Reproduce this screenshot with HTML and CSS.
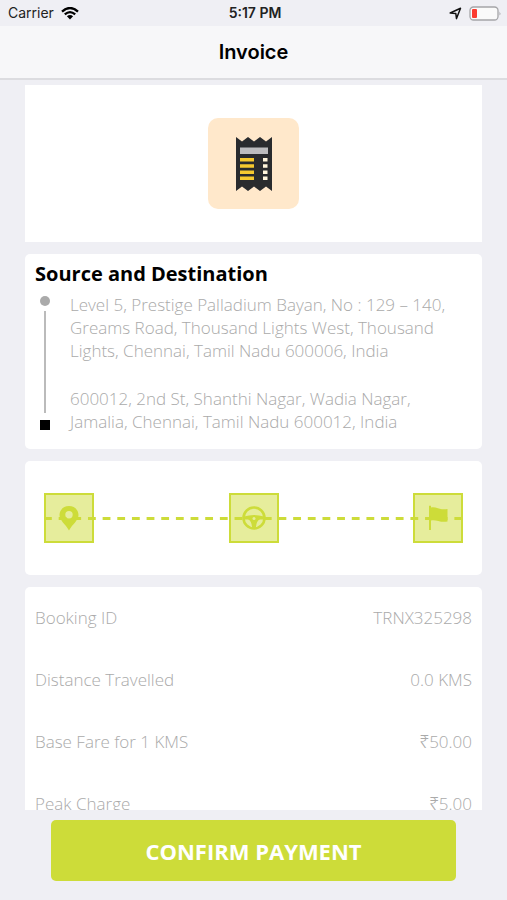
FILE: index.html
```html
<!DOCTYPE html>
<html lang="en">
<head>
<meta charset="utf-8">
<meta name="viewport" content="width=device-width, initial-scale=1">
<title>Invoice</title>
<link rel="stylesheet" href="styles.css">
</head>
<body>
<div class="status">
  <div class="status-left">
    <span>Carrier</span>
    <svg width="18" height="13" viewBox="0 0 18 13" aria-hidden="true">
      <path d="M1 4.6Q9-2.6 17 4.6M3.8 7.4Q9 2.8 14.2 7.4" fill="none" stroke="#000" stroke-width="2.3"/>
      <path d="M5.900 9.300Q9 6.900 12.100 9.300L9 12.600z"/>
    </svg>
  </div>
  <div class="status-time">5:17 PM</div>
  <div class="status-right">
    <svg width="13" height="13" viewBox="0 0 13 13" aria-hidden="true">
      <path d="M1.200 6L11.500 1.300 7.500 11.600 6.800 6.500z" fill="none" stroke="#111" stroke-width="1.500" stroke-linejoin="round"/>
    </svg>
    <svg width="33" height="15" viewBox="0 0 33 15" aria-hidden="true">
      <rect x="1" y="1" width="28" height="13" rx="3.500" fill="#fafafa" stroke="#a5a5a8" stroke-width="1.300"/>
      <rect x="3" y="3" width="5" height="9" rx="1" fill="#fb3b30"/>
      <path d="M30.500 5.500q1.800 2 0 4z" fill="#a5a5a8"/>
    </svg>
  </div>
</div>
<header class="nav"><h1>Invoice</h1></header>

<main class="content">
  <section class="card hero">
    <div class="hero-icon">
      <svg width="38" height="54" viewBox="0 0 38 54" aria-hidden="true">
        <path d="M1 0L7 4.500 13 0 19 4.500 25 0 31 4.500 37 0V54L31 49.500 25 54 19 49.500 13 54 7 49.500 1 54z" fill="#292b2e"/>
        <path d="M5 10.500h28v6.500H5z" fill="#bcbcbe"/>
        <path d="M5 21h14v3.500H5zM5 27.300h14v3.500H5zM5 33.400h14v3.500H5zM5 39.500h14V43H5z" fill="#f5c92f"/>
        <path d="M28 21h4.500v3.500H28zM28 27.300h4.500v3.500H28zM28 33.400h4.500v3.500H28zM28 39.500h4.500V43H28z" fill="#fff6dc"/>
      </svg>
    </div>
  </section>

  <section class="card route">
    <h2>Source and Destination</h2>
    <div class="route-body">
      <div class="route-rail">
        <span class="rail-dot"></span>
        <span class="rail-line"></span>
        <span class="rail-square"></span>
      </div>
      <div class="route-text">
        <p>Level 5, Prestige Palladium Bayan, No : 129 – 140, Greams Road, Thousand Lights West, Thousand Lights, Chennai, Tamil Nadu 600006, India</p>
        <p>600012, 2nd St, Shanthi Nagar, Wadia Nagar, Jamalia, Chennai, Tamil Nadu 600012, India</p>
      </div>
    </div>
  </section>

  <section class="card progress">
    <div class="steps">
      <div class="step">
        <svg width="26" height="30" viewBox="0 0 26 30" aria-hidden="true">
          <path fill-rule="evenodd" d="M13 3C7.500 3 3.500 7 3.500 12c0 5.500 6 9 9.500 15.500C16.500 21 22.500 17.500 22.500 12 22.500 7 18.500 3 13 3zm0 5a3.700 3.700 0 1 1 0 7.400 3.700 3.700 0 0 1 0-7.400z"/>
        </svg>
      </div>
      <div class="step">
        <svg width="26" height="30" viewBox="0 0 26 30" aria-hidden="true">
          <circle cx="13" cy="15" r="10.500" fill="none" stroke="#cddc39" stroke-width="2.600"/>
          <path d="M3 13.500Q13 10.500 23 13.500V16.500H19Q15.500 17 14.800 25H11.200Q10.500 17 7 16.500H3z"/>
          <circle cx="13" cy="15.500" r="1.500" fill="#e6ed9c"/>
        </svg>
      </div>
      <div class="step">
        <svg width="26" height="30" viewBox="0 0 26 30" aria-hidden="true">
          <path d="M4 3q1-1 2 0v1.500C11 3 14 7.500 22.500 6V18.500C15 20 11 16 6 17.500V27H4z"/>
        </svg>
      </div>
    </div>
  </section>

  <section class="card fares">
    <dl>
      <div class="fare"><dt>Booking ID</dt><dd>TRNX325298</dd></div>
      <div class="fare"><dt>Distance Travelled</dt><dd>0.0 KMS</dd></div>
      <div class="fare"><dt>Base Fare for 1 KMS</dt><dd>₹50.00</dd></div>
      <div class="fare"><dt>Peak Charge</dt><dd>₹5.00</dd></div>
    </dl>
  </section>
</main>

<footer class="footer">
  <button type="button" class="confirm">CONFIRM PAYMENT</button>
</footer>
</body>
</html>
```
FILE: styles.css
```css
* {
  box-sizing: border-box;
  margin: 0;
  padding: 0;
}

body {
  display: flex;
  flex-direction: column;
  height: 100vh;
  background: #efeff4;
  color: #000;
  font-family: "Open Sans", "Noto Sans", sans-serif;
}

svg {
  display: block;
}

.status {
  display: grid;
  grid-template-columns: 1fr auto 1fr;
  align-items: center;
  flex: none;
  height: 26px;
  padding: 0 5px 0 8px;
  font: 14px/26px Inter, sans-serif;
  color: #222;
}

.status-left,
.status-right {
  display: flex;
  align-items: center;
  gap: 7px;
}

.status-right {
  justify-content: flex-end;
}

.status-time {
  font-weight: 600;
}

.nav {
  flex: none;
  background: #f7f7f9;
  border-bottom: 2px solid #dcdce0;
  text-align: center;
}

.nav h1 {
  font: 600 20px/52px Inter, sans-serif;
}

.content {
  display: flex;
  flex-direction: column;
  flex: 1;
  gap: 12px;
  min-height: 0;
  overflow-x: hidden;
  overflow-y: auto;
  scrollbar-width: none;
  padding: 5px 25px 0;
}

.card {
  flex: none;
  background: #fff;
  border-radius: 5px;
}

.hero {
  display: flex;
  justify-content: center;
  padding: 33px 0;
  border-radius: 0;
}

.hero-icon {
  display: grid;
  place-items: center;
  width: 91px;
  height: 91px;
  border-radius: 10px;
  background: #ffe8cb;
}

.route {
  padding: 6px 10px 16px;
}

.route h2 {
  font-size: 20px;
  line-height: 28px;
  font-weight: 700;
}

.route-body {
  display: flex;
  gap: 17px;
  padding-top: 5px;
}

.route-rail {
  display: flex;
  flex-direction: column;
  align-items: center;
  width: 16px;
  padding: 3px 0;
  margin-left: 2px;
}

.rail-dot {
  width: 10px;
  height: 10px;
  border-radius: 50%;
  background: #aaa;
}

.rail-line {
  flex: 1;
  width: 2px;
  margin: 5px 0 7px;
  background: #bbb;
}

.rail-square {
  width: 10px;
  height: 10px;
  background: #000;
}

.route-text {
  flex: 1;
  font-size: 17px;
  line-height: 23px;
  font-weight: 300;
  color: #aaa;
}

.route-text p + p {
  margin-top: 25px;
}

.progress {
  padding: 32px 19px;
}

.steps {
  display: flex;
  justify-content: space-between;
  background: linear-gradient(90deg, #cddc39 55%, transparent 55%) 0 50% / 3.5% 3px repeat-x;
}

.step {
  display: grid;
  place-items: center;
  width: 50px;
  height: 50px;
  border: 2px solid #cddc39;
  background: rgba(205, 220, 57, 0.5);
}

.step svg {
  fill: #cddc39;
}

.fare {
  display: flex;
  justify-content: space-between;
  padding: 0 10px;
  font-size: 17px;
  line-height: 62px;
  font-weight: 300;
  color: #aaa;
}

.footer {
  flex: none;
  padding: 10px 51px 19px;
}

.confirm {
  width: 100%;
  height: 61px;
  border: 0;
  border-radius: 5px;
  background: #cddc39;
  color: #fff;
  font: 700 22px/30px "Open Sans", sans-serif;
}
```
